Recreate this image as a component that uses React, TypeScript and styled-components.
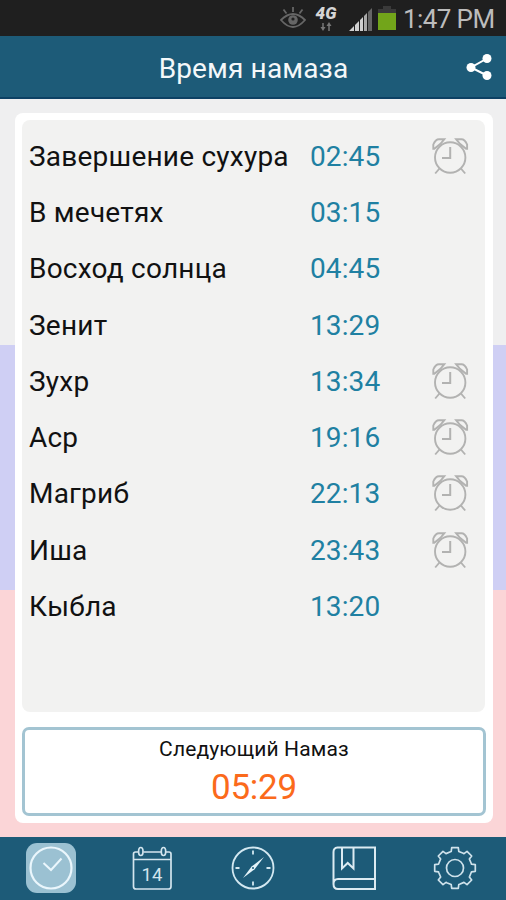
import React from "react";
import styled, { createGlobalStyle } from "styled-components";

const GlobalStyle = createGlobalStyle`
  * { box-sizing: border-box; }
  body { margin: 0; font-family: Roboto, "Noto Sans", sans-serif; }
  button { font-family: inherit; }
  svg { display: block; flex: none; }
`;

const Screen = styled.div`
  width: 506px;
  height: 900px;
  display: flex;
  flex-direction: column;
  overflow: hidden;
`;

const StatusBar = styled.div`
  height: 36px;
  flex: none;
  background: #1f1f1f;
  display: flex;
  align-items: center;
  justify-content: flex-end;
  padding: 2px 12px 0 0;
`;

const Clock = styled.span`
  font-size: 26px;
  line-height: 34px;
  color: #bcbcbc;
  margin-left: 7px;
  width: 91px;
  letter-spacing: -0.6px;
  white-space: nowrap;
`;

const Header = styled.header`
  height: 63px;
  flex: none;
  background: #1d5b78;
  border-bottom: 2px solid #0d4164;
  display: grid;
  grid-template-columns: 60px 1fr 60px;
  align-items: center;
`;

const Title = styled.h1`
  grid-column: 2;
  margin: 4px 0 0 1px;
  text-align: center;
  font-size: 28px;
  font-weight: 400;
  letter-spacing: 0.15px;
  color: #f4f8fa;
  white-space: nowrap;
`;

const ShareButton = styled.button`
  border: 0;
  background: none;
  padding: 0;
  margin: 1px 14px 0 auto;
`;

const Body = styled.main`
  flex: 1;
  min-height: 0;
  padding: 14px 13px 14px 15px;
  display: flex;
  background: linear-gradient(#efeff0 0 246px, #cfcff4 246px 491px, #fbd5d7 491px);
`;

const Card = styled.section`
  flex: 1;
  background: #fff;
  border-radius: 8px;
  padding: 7px;
  display: flex;
  flex-direction: column;
  gap: 15px;
`;

const Schedule = styled.div`
  flex: 1;
  background: #f2f2f1;
  border-radius: 8px;
  margin-right: 1px;
  padding: 8.8px 0 0 7px;
`;

const Row = styled.div`
  height: 56.25px;
  display: grid;
  grid-template-columns: 281px 121px 38px;
  align-items: center;
`;

const Name = styled.span`
  font-size: 28px;
  line-height: 36px;
  color: #111;
  letter-spacing: 0.22px;
  white-space: nowrap;
`;

const Time = styled.span`
  font-size: 28px;
  line-height: 36px;
  letter-spacing: 0.1px;
  color: #2080a2;
`;

const NextPrayer = styled.div`
  height: 89px;
  flex: none;
  border: 3px solid #a3c4d2;
  border-radius: 7px;
  display: flex;
  flex-direction: column;
  align-items: center;
`;

const NextLabel = styled.span`
  font-size: 21px;
  line-height: 24px;
  margin-top: 7px;
  letter-spacing: 0.15px;
  color: #111;
`;

const NextTime = styled.span`
  font-size: 35px;
  line-height: 42px;
  margin-top: 6px;
  letter-spacing: -0.2px;
  color: #fb6a1b;
`;

const TabBar = styled.nav`
  height: 63px;
  flex: none;
  background: #1d5b78;
  display: grid;
  grid-template-columns: repeat(5, 1fr);
  padding-bottom: 1px;
`;

const Tab = styled.button<{ $active?: boolean }>`
  width: 50px;
  height: 50px;
  place-self: center;
  border: 0;
  padding: 0;
  border-radius: 11px;
  background: ${(p) => (p.$active ? "#9bc1d2" : "transparent")};
  display: flex;
  align-items: center;
  justify-content: center;
`;

const EyeIcon = () => (
  <svg width="26" height="24" viewBox="0 0 26 24" fill="none" stroke="#666" strokeWidth="1.8">
    <path d="M1 13Q7 7 13 7T25 13Q19 20 13 20T1 13Z" />
    <circle cx="13" cy="13" r="4.8" fill="#666" stroke="none" />
    <circle cx="13" cy="12" r="1.6" fill="#222" stroke="none" />
    <path d="M13 5V0M6.5 6.5 3.5 2.5M19.5 6.5l3-4" />
  </svg>
);

const NetworkBadge = styled.span`
  width: 26px;
  display: flex;
  flex-direction: column;
  align-items: center;
  font-size: 17px;
  line-height: 17px;
  font-weight: 900;
  font-style: italic;
  color: #d5d5d5;
`;

const NetworkIcon = () => (
  <NetworkBadge>
    4G
    <svg width="12" height="10" viewBox="0 0 12 10">
      <path d="M3 1v5M9 9V3" stroke="#777" strokeWidth="1.5" />
      <path d="m.5 5 2.5 4 2.5-4zM6.5 4 9 0l2.5 4z" fill="#777" />
    </svg>
  </NetworkBadge>
);

const SignalIcon = () => (
  <svg width="24" height="24" viewBox="0 0 24 24">
    <path d="M0 24 5 19V24zM6 24V18l4-4V24zM11 24V13l3-3V24z" fill="#d0d0d0" />
    <path d="M15 24V9l3-3V24z" fill="#aaa" />
    <path d="M19 24V5l4-4V24z" fill="#666" />
  </svg>
);

const BatteryIcon = () => (
  <svg width="18" height="26" viewBox="0 0 18 26">
    <path d="M0 4h5V1h8v3h5v4H0z" fill="#3a3a3a" />
    <path d="M0 8h18v17H0z" fill="#72a51a" />
  </svg>
);

const StatusIcons = styled.div`
  display: flex;
  align-items: center;
  & > :nth-child(2) { margin: -1px 0 0 7px; }
  & > :nth-child(3) { margin: 0 0 0 10px; }
  & > :nth-child(4) { margin: 0 0 0 5px; }
  & > :nth-child(3), & > :nth-child(4) {
    align-self: flex-end;
    margin-bottom: 2px;
  }
`;

const ShareIcon = () => (
  <svg width="26" height="28" viewBox="0 0 26 28" fill="#fff">
    <path d="m21 5.5-16 9 16 8" fill="none" stroke="#fff" strokeWidth="2" />
    <circle cx="21" cy="5.5" r="4.5" />
    <circle cx="5" cy="14.5" r="4.5" />
    <circle cx="21" cy="22.5" r="4.5" />
  </svg>
);

const AlarmIcon = () => (
  <svg width="38" height="38" viewBox="0 0 38 38" fill="none" stroke="#b2b2b1" strokeWidth="1.9">
    <circle cx="19.2" cy="19.5" r="15.2" />
    <path d="M19.2 9V20H11" strokeWidth="2" />
    <path d="M2.3 10.8V6.5Q4.5 1.2 8 1.2H13.3L9.5 5.8 3.3 10.8ZM36.1 10.8V6.5Q33.9 1.2 30.4 1.2H25.1L28.9 5.800 35.1 10.8Z" />
    <path d="m8.500 30.500-4.300 5M29.900 30.500l4.300 5" />
  </svg>
);

const ClockIcon = () => (
  <svg width="50" height="50" viewBox="0 0 50 50" fill="none" stroke="#eaf6fc">
    <circle cx="25" cy="25" r="20.5" strokeWidth="2.2" />
    <path d="m17.5 20 7.5 7L35.5 15.5" strokeWidth="2" />
  </svg>
);

const CalendarIcon = () => (
  <svg width="50" height="50" viewBox="0 0 50 50" fill="none" stroke="#d3e5ee" strokeWidth="1.7">
    <path d="M11 9H8.5Q6.5 9 6.5 11V43.5Q6.5 46 9 46H41.5Q44 46 44 43.5V11Q44 9 42 9H39M16.5 9H34M6.5 16.5H44" />
    <ellipse cx="13.8" cy="8.5" rx="2.2" ry="4" />
    <ellipse cx="36.5" cy="8.5" rx="2.2" ry="4" />
    <text x="25" y="37.5" textAnchor="middle" fontSize="18.5" fill="#d3e5ee" stroke="none">14</text>
  </svg>
);

const CompassIcon = () => (
  <svg width="50" height="50" viewBox="0 0 50 50" fill="none" stroke="#d3e8f1">
    <circle cx="25" cy="25" r="20.5" strokeWidth="1.8" />
    <path d="M25 7.5v4M25 38.5v4M7.5 25h4M38.5 25h4" strokeWidth="1.8" />
    <path d="M36 14 26.6 26.2 15 35 23.6 23.6Z" fill="#e4f3f9" stroke="none" />
    <circle cx="25" cy="25" r="1" fill="#1d5b78" stroke="none" />
  </svg>
);

const BookIcon = () => (
  <svg width="50" height="50" viewBox="0 0 50 50" fill="none" stroke="#dcebf2" strokeWidth="2">
    <path d="M46 4.5H8.5Q4.5 5 4.5 9V41Q4.5 46 9 46H46ZM46 36H9Q4.5 36 4.5 41Q4.5 46 9 46" />
    <path d="M13 5V25.5L18.7 20 24.5 25.5V5" />
  </svg>
);

const GearIcon = () => {
  const tooth = [
    [-3.8, -16.5],
    [-3.3, -20.3],
    [3.3, -20.3],
    [3.8, -16.5],
    [8.3, -14.7],
  ];
  const points = Array.from({ length: 8 }, (_, i) => {
    const a = (i * Math.PI) / 4;
    return tooth
      .map(([x, y]) => `${25 + x * Math.cos(a) - y * Math.sin(a)},${25 + x * Math.sin(a) + y * Math.cos(a)}`)
      .join(" ");
  }).join(" ");
  return (
    <svg width="50" height="50" viewBox="0 0 50 50" fill="none" stroke="#cfe2eb" strokeWidth="1.7" strokeLinejoin="round">
      <polygon points={points} />
      <circle cx="25" cy="25" r="8.5" />
    </svg>
  );
};

const prayers = [
  { name: "Завершение сухура", time: "02:45", alarm: true },
  { name: "В мечетях", time: "03:15" },
  { name: "Восход солнца", time: "04:45" },
  { name: "Зенит", time: "13:29" },
  { name: "Зухр", time: "13:34", alarm: true },
  { name: "Аср", time: "19:16", alarm: true },
  { name: "Магриб", time: "22:13", alarm: true },
  { name: "Иша", time: "23:43", alarm: true },
  { name: "Кыбла", time: "13:20" },
];

export default function App() {
  return (
    <Screen>
      <GlobalStyle />
      <StatusBar>
        <StatusIcons>
          <EyeIcon />
          <NetworkIcon />
          <SignalIcon />
          <BatteryIcon />
        </StatusIcons>
        <Clock>1:47 PM</Clock>
      </StatusBar>
      <Header>
        <Title>Время намаза</Title>
        <ShareButton aria-label="Поделиться"><ShareIcon /></ShareButton>
      </Header>
      <Body>
        <Card>
          <Schedule>
            {prayers.map((p) => (
              <Row key={p.name}>
                <Name>{p.name}</Name>
                <Time>{p.time}</Time>
                {p.alarm && <AlarmIcon />}
              </Row>
            ))}
          </Schedule>
          <NextPrayer>
            <NextLabel>Следующий Намаз</NextLabel>
            <NextTime>05:29</NextTime>
          </NextPrayer>
        </Card>
      </Body>
      <TabBar>
        <Tab $active><ClockIcon /></Tab>
        <Tab><CalendarIcon /></Tab>
        <Tab><CompassIcon /></Tab>
        <Tab><BookIcon /></Tab>
        <Tab><GearIcon /></Tab>
      </TabBar>
    </Screen>
  );
}
